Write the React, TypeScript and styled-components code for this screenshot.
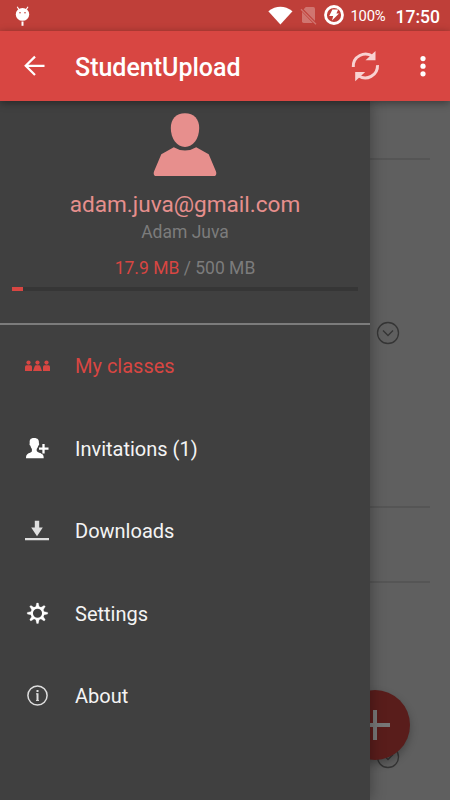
import React from "react";
import styled, { createGlobalStyle } from "styled-components";

const Global = createGlobalStyle`
  * { box-sizing: border-box; }
  html, body { margin: 0; padding: 0; overflow: hidden; }
  body { font-family: Roboto, "Liberation Sans", sans-serif; }
  svg { display: block; flex: none; }
`;

const Screen = styled.div`
  width: 450px;
  height: 800px;
  display: flex;
  flex-direction: column;
  overflow: hidden;
  background: #5f5f5f;
`;

const StatusBar = styled.div`
  height: 31px;
  flex: none;
  display: flex;
  align-items: center;
  justify-content: space-between;
  background: #bf3f39;
  color: #fff;
  padding: 0 10px 0 15px;
`;

const StatusGroup = styled.div`
  display: flex;
  align-items: center;
`;

const Battery = styled.span`
  font-size: 14.8px;
  line-height: 31px;
  width: 35px;
  margin: 2px 10px 0 6px;
  letter-spacing: -0.3px;
  white-space: nowrap;
`;

const Clock = styled.span`
  font-size: 17.5px;
  font-weight: 500;
  line-height: 31px;
  margin-top: 3px;
`;

const Toolbar = styled.header`
  height: 70px;
  flex: none;
  display: flex;
  align-items: center;
  background: #d84642;
  box-shadow: 0 2px 8px rgba(0, 0, 0, 0.4);
  position: relative;
  z-index: 3;
  padding: 0 22.5px 0 20px;
`;

const Title = styled.h1`
  margin: 3px 0 0 25px;
  flex: 1;
  font-size: 25px;
  line-height: 30px;
  font-weight: 500;
  color: #fff;
`;

const Actions = styled.div`
  display: flex;
  align-items: center;
  gap: 35.5px;
`;

const Body = styled.main`
  flex: 1;
  position: relative;
  min-height: 0;
`;

const Page = styled.div`
  height: 100%;
  display: flex;
  flex-direction: column;
  padding: 0 20px;
`;

const Section = styled.section<{ $height: number; $last?: boolean }>`
  height: ${(p) => p.$height}px;
  flex: none;
  display: flex;
  justify-content: flex-end;
  align-items: center;
  padding-right: 30px;
  border-bottom: ${(p) => (p.$last ? "0" : "2px solid #555")};
`;

const Fab = styled.div`
  position: absolute;
  left: 340px;
  top: 589px;
  width: 70px;
  height: 70px;
  border-radius: 50%;
  background: #591d1b;
  box-shadow: 0 4px 8px rgba(0, 0, 0, 0.28);
  display: flex;
  align-items: center;
  justify-content: center;
`;

const Drawer = styled.aside`
  position: absolute;
  left: 0;
  top: 0;
  bottom: 0;
  width: 370px;
  background: #404040;
  box-shadow: 0 0 14px rgba(0, 0, 0, 0.35);
  z-index: 2;
`;

const Account = styled.div`
  height: 224px;
  padding: 12px 12px 0;
  border-bottom: 2px solid #7c7c7c;
  display: flex;
  flex-direction: column;
  align-items: center;
`;

const Email = styled.div`
  margin-top: 14px;
  font-size: 22.6px;
  line-height: 28px;
  color: #e78f8d;
`;

const Name = styled.div`
  margin-top: 1px;
  font-size: 17.5px;
  line-height: 24px;
  color: #7c7c7c;
`;

const Usage = styled.div`
  margin-top: 13px;
  font-size: 17.5px;
  line-height: 22px;
  color: #7c7c7c;
`;

const Used = styled.span`
  color: #d84642;
`;

const Track = styled.div`
  margin-top: 8px;
  width: 346px;
  height: 4px;
  background: #363636;
`;

const Fill = styled.div`
  width: 11px;
  height: 4px;
  background: #d84642;
`;

const Item = styled.div<{ $active?: boolean }>`
  height: 82.5px;
  display: flex;
  align-items: center;
  padding-left: 22px;
  font-size: 20px;
  color: ${(p) => (p.$active ? "#d84642" : "#f4f4f4")};
`;

const Label = styled.span`
  margin-left: 23px;
  line-height: 24px;
`;

const Expand = () => (
  <svg width="24" height="24" viewBox="0 0 24 24" fill="none" stroke="#353535" strokeWidth="1.3">
    <circle cx="12" cy="12" r="10.5" />
    <path d="M7 9.5l5 5 5-5" />
  </svg>
);

const Robot = () => (
  <svg width="16" height="20" viewBox="0 0 16 20">
    <path d="M2.2 0.8l1.8 2.8M13 0.8l-1.8 2.8" stroke="#fff" strokeWidth="1.1" />
    <ellipse cx="7.5" cy="8.4" rx="6.7" ry="6.4" fill="#fff" />
    <circle cx="5" cy="6.8" r="0.8" fill="#bf3f39" />
    <circle cx="10" cy="6.8" r="0.8" fill="#bf3f39" />
    <path d="M7.5 15.5v4.3" stroke="#fff" strokeWidth="2" />
  </svg>
);

const StatusIcons = () => (
  <svg width="77" height="31" viewBox="268 0 77 31">
    <path d="M268.3 11.2Q280.4 2.4 292.5 11.2L280.4 24.6z" fill="#fff" />
    <path d="M305.8 7h7.5q1.7 0 1.7 1.7v12.6q0 1.7-1.7 1.7h-9.6q-1.7 0-1.7-1.7V11z" fill="#d07570" />
    <path d="M301 8.8l15 15.3" stroke="#bf3f39" strokeWidth="3" />
    <path d="M301 9.3l15 15" stroke="#d07570" strokeWidth="1.3" />
    <circle cx="334" cy="15" r="8.5" fill="none" stroke="#fff" strokeWidth="2.8" />
    <path d="M332.4 9.5h5.8l-1.8 4h2.6l-7 7 1.2-4.6h-4z" fill="#fff" />
  </svg>
);

const Back = () => (
  <svg width="30" height="30" viewBox="20 51 30 30" fill="none" stroke="#fff" strokeWidth="2.2">
    <path d="M44.5 65.8H26M35 56.6l-9.3 9.2 9.3 9.2" />
  </svg>
);

const Sync = () => (
  <svg width="32" height="36" viewBox="350 48 32 36">
    <g fill="none" stroke="#f8d2d1" strokeWidth="3">
      <path d="M353.3 67A12.200 12.200 0 0 1 373 56.7" />
      <path d="M377.5 65.1A12.200 12.200 0 0 1 358.2 75.6" />
    </g>
    <path d="M375.500 51v9.200h-10z" fill="#f8d2d1" />
    <path d="M355.200 81.200V72h10z" fill="#f8d2d1" />
  </svg>
);

const More = () => (
  <svg width="10" height="24" viewBox="0 0 10 24" fill="#fff">
    <circle cx="5" cy="4.600" r="2.600" />
    <circle cx="5" cy="12.200" r="2.600" />
    <circle cx="5" cy="19.800" r="2.600" />
  </svg>
);

const Avatar = () => (
  <svg width="64" height="64" viewBox="0 0 64 64" fill="#e78f8d">
    <path d="M32 .3c9 0 14.2 6 14.2 14.7C46.2 25.500 40 34 32 34S17.800 25.500 17.800 15C17.800 6.300 23 .3 32 .3z" />
    <path d="M20.800 34.200Q32 41 43.200 34.200L55.700 41.200 63 58.500Q64.200 63 60.500 63H3.500Q-.2 63 1 58.500L8.300 41.200z" />
  </svg>
);

const ClassesIcon = () => (
  <svg width="30" height="30" viewBox="0 0 30 30" fill="currentColor">
    {[6.5, 15.5, 24.5].map((x) => (
      <circle key={x} cx={x} cy="11.600" r="2.100" />
    ))}
    <path d="M3 20v-4q0-1.800 1.500-1.800h4q1.500 0 1.500 1.800v4zM11 20l1.700-4.800q.3-1 1.300-1h3q1 0 1.300 1L20 20zM21 20v-4q0-1.800 1.500-1.800h4q1.500 0 1.500 1.800v4z" />
  </svg>
);

const InviteIcon = () => (
  <svg width="30" height="30" viewBox="0 0 30 30" fill="#fff">
    <path d="M12 4c4 0 5.300 2.200 4.900 5.300.7.700.2 2-.6 2.500-.3 1.400-.9 2.400-1.600 3.100v2.200c.8 1.500 4.200 1.900 5.700 3.100 1 .8 1.300 2 1.300 4H4c0-2 .3-3.200 1.300-4 1.500-1.200 4.600-1.600 4.600-3.100v-2.200c-.7-.7-1.200-1.700-1.500-3.100-.8-.5-1.300-1.800-.6-2.500C7.300 6.200 8.200 4 12 4z" />
    <path d="M21.500 9.500v10M17.800 14.700h8.700" stroke="#404040" strokeWidth="4.500" />
    <path d="M21.500 10v9.500M17 14.700h9.500" stroke="#fff" strokeWidth="2.300" />
  </svg>
);

const DownloadIcon = () => (
  <svg width="30" height="30" viewBox="0 0 30 30" fill="#dedede">
    <path d="M12.800 4.700h4.400v6.800h3.600L15 20.300 9.200 11.500h3.600zM3 22h24v2.200H3z" />
  </svg>
);

const GearIcon = () => (
  <svg width="30" height="30" viewBox="0 0 30 30" fill="none" stroke="#fff">
    <circle cx="15.500" cy="14.200" r="5.700" strokeWidth="2.300" />
    {[0, 45, 90, 135, 180, 225, 270, 315].map((a) => (
      <path key={a} d="M14.700 4h1.600l1 4.400h-3.600z" fill="#fff" strokeWidth="0.300" transform={`rotate(${a} 15.500 14.200)`} />
    ))}
  </svg>
);

const InfoIcon = () => (
  <svg width="30" height="30" viewBox="0 0 30 30" fill="none" stroke="#dedede">
    <circle cx="15.500" cy="14.500" r="9.600" strokeWidth="1.500" />
    <path d="M15.500 12.300v7.500M15.500 9v2" strokeWidth="2" />
    <path d="M14 12.900h1.500M14 19.500h3" strokeWidth="0.900" />
  </svg>
);

const items = [
  { label: "My classes", icon: <ClassesIcon />, active: true },
  { label: "Invitations (1)", icon: <InviteIcon /> },
  { label: "Downloads", icon: <DownloadIcon /> },
  { label: "Settings", icon: <GearIcon /> },
  { label: "About", icon: <InfoIcon /> },
];

export default function App() {
  return (
    <Screen>
      <Global />
      <StatusBar>
        <Robot />
        <StatusGroup>
          <StatusIcons />
          <Battery>100%</Battery>
          <Clock>17:50</Clock>
        </StatusGroup>
      </StatusBar>
      <Toolbar>
        <Back />
        <Title>StudentUpload</Title>
        <Actions>
          <Sync />
          <More />
        </Actions>
      </Toolbar>
      <Body>
        <Page>
          <Section $height={59} />
          <Section $height={348}>
            <Expand />
          </Section>
          <Section $height={75} />
          <Section $height={348} $last>
            <Expand />
          </Section>
        </Page>
        <Fab>
          <svg width="30" height="30" viewBox="0 0 30 30">
            <path d="M15 0v30M0 15h30" stroke="#777" strokeWidth="4" />
          </svg>
        </Fab>
        <Drawer>
          <Account>
            <Avatar />
            <Email>adam.juva@gmail.com</Email>
            <Name>Adam Juva</Name>
            <Usage>
              <Used>17.9 MB</Used> / 500 MB
            </Usage>
            <Track>
              <Fill />
            </Track>
          </Account>
          <nav>
            {items.map((it) => (
              <Item key={it.label} $active={it.active}>
                {it.icon}
                <Label>{it.label}</Label>
              </Item>
            ))}
          </nav>
        </Drawer>
      </Body>
    </Screen>
  );
}
